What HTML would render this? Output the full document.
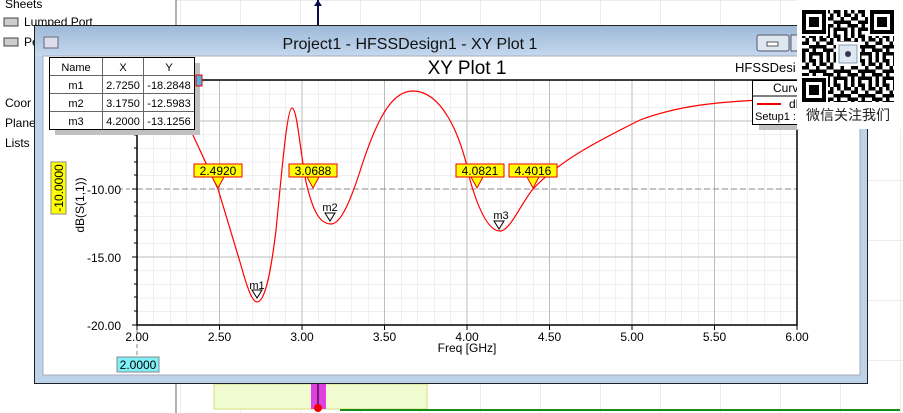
<!DOCTYPE html>
<html><head><meta charset="utf-8"><style>
html,body{margin:0;padding:0;width:903px;height:413px;overflow:hidden;background:#fff;font-family:"Liberation Sans","Noto Sans CJK SC",sans-serif}
svg{position:absolute;left:0;top:0}
</style></head><body>
<svg width="903" height="413" viewBox="0 0 903 413" font-family="Liberation Sans, Noto Sans CJK SC, sans-serif">
<defs>
<pattern id="bg" x="0" y="0" width="60" height="60" patternUnits="userSpaceOnUse"><path d="M0 0H60M0 0V60" stroke="#e6e6e6" stroke-width="1.5" fill="none"/></pattern>
<pattern id="mg" x="137" y="80.2" width="16.5" height="13.6" patternUnits="userSpaceOnUse"><path d="M0 0H16.5M0 0V13.6" stroke="#e0e0e0" stroke-width="1" fill="none"/></pattern>
<pattern id="qr" x="802" y="10" width="24.5" height="24.5" patternUnits="userSpaceOnUse">
<path d="M0 0h3.5v3.5h-3.5zM7 0h7v3.5h-7zM17.5 0h3.5v7h-3.5zM3.5 3.5h3.5v7h-3.5zM10.5 3.5h3.5v3.5h-3.5zM21 3.5h3.5v3.5h-3.5zM0 7h3.5v3.5h-3.5zM14 7h3.5v7h-3.5zM7 10.5h7v3.5h-7zM17.5 10.5h7v3.5h-7zM0 14h3.5v7h-3.5zM3.5 14h3.5v3.5h-3.5zM10.5 14h3.5v7h-3.5zM21 14h3.5v3.5h-3.5zM7 17.5h3.5v7h-3.5zM14 17.5h7v3.5h-7zM0 21h3.5v3.5h-3.5zM17.5 21h3.5v3.5h-3.5z" fill="#000"/>
</pattern>
<linearGradient id="tb" x1="0" y1="0" x2="0" y2="1"><stop offset="0" stop-color="#9db9d8"/><stop offset="1" stop-color="#c4d8ee"/></linearGradient>
</defs>
<rect x="176" y="0" width="727" height="413" fill="url(#bg)"/>
<line x1="176" y1="0" x2="176" y2="413" stroke="#666"/>
<text x="5" y="8" font-size="12">Sheets</text>
<rect x="4" y="18" width="14" height="8" fill="#ccc" stroke="#444"/><text x="24" y="26" font-size="12">Lumped Port</text>
<rect x="4" y="38" width="14" height="8" fill="#ccc" stroke="#444"/><text x="24" y="46" font-size="12">Pe</text>
<text x="5" y="107" font-size="12">Coor</text>
<text x="5" y="127" font-size="12">Plane</text>
<text x="5" y="147" font-size="12">Lists</text>
<line x1="318" y1="0" x2="318" y2="25" stroke="#0a0a50" stroke-width="2"/>
<path d="M314 6L318 0L322 6Z" fill="#0a0a50"/>
<rect x="214" y="384" width="213" height="25" fill="#f1fbd0" stroke="#d8dc7a"/>
<rect x="311" y="384" width="15" height="25" fill="#e040e0"/>
<line x1="318" y1="384" x2="318" y2="405" stroke="#000"/>
<circle cx="318" cy="408" r="4" fill="#e00"/>
<path d="M340 410H900" stroke="#1a8a1a" stroke-width="2"/>
<rect x="34.5" y="25.5" width="833" height="358" fill="#bcd3ea" stroke="#222"/>
<rect x="35" y="26" width="832" height="30" fill="url(#tb)"/>
<rect x="43" y="56" width="817" height="319" fill="#fff" stroke="#aab"/>
<rect x="44" y="37" width="14" height="11" fill="#dde" stroke="#667"/>
<text x="410" y="49" font-size="16" text-anchor="middle" fill="#111">Project1 - HFSSDesign1 - XY Plot 1</text>
<rect x="757" y="35" width="32" height="16" rx="2" fill="#dfe7f1" stroke="#556"/>
<rect x="767" y="42" width="11" height="4" fill="#fff" stroke="#333" stroke-width="0.8"/>
<rect x="791" y="35" width="10" height="16" fill="#dfe7f1" stroke="#556"/>
<text x="467" y="74" font-size="19" text-anchor="middle">XY Plot 1</text>
<text x="735" y="72" font-size="13">HFSSDesi</text>
<rect x="137" y="80" width="660" height="245" fill="url(#mg)"/>
<g stroke="#bdbdbd" stroke-width="1">
<path d="M219.5 80V325M302 80V325M384.5 80V325M467 80V325M549.5 80V325M632 80V325M714.5 80V325"/>
<path d="M137 257H797M137 121H797"/>
</g>
<path d="M137 189H797" stroke="#888" stroke-dasharray="6,3"/>
<path d="M137 189H120" stroke="#888" stroke-dasharray="4,3"/>
<rect x="137" y="80" width="660" height="245" fill="none" stroke="#000" stroke-width="1.5"/>
<g stroke="#000">
<path d="M132 325H137M132 257H137M132 189H137M132 121H137M134 311H137M134 297H137M134 284H137M134 270H137M134 243H137M134 230H137M134 216H137M134 202H137M134 175H137M134 162H137M134 148H137M134 135H137M134 107H137M134 94H137"/>
<path d="M137 325V330M219.5 325V330M302 325V330M384.5 325V330M467 325V330M549.5 325V330M632 325V330M714.5 325V330M797 325V330"/>
</g>
<path d="M137 330V355" stroke="#888" stroke-dasharray="4,3"/>
<g font-size="12" text-anchor="end">
<text x="121" y="330">-20.00</text><text x="121" y="262">-15.00</text><text x="121" y="194">-10.00</text>
</g>
<g font-size="12" text-anchor="middle">
<text x="137" y="341">2.00</text><text x="219.5" y="341">2.50</text><text x="302" y="341">3.00</text><text x="384.5" y="341">3.50</text><text x="467" y="341">4.00</text><text x="549.5" y="341">4.50</text><text x="632" y="341">5.00</text><text x="714.5" y="341">5.50</text><text x="797" y="341">6.00</text>
<text x="467" y="352">Freq [GHz]</text>
</g>
<text transform="translate(84,205) rotate(-90)" font-size="12" text-anchor="middle">dB(S(1,1))</text>
<rect x="51" y="162" width="15" height="52" fill="#ff0" stroke="#888"/>
<text transform="translate(63,188) rotate(-90)" font-size="12" text-anchor="middle">-10.0000</text>
<rect x="117" y="357" width="42" height="15" fill="#7ff0f8" stroke="#888"/>
<text x="138" y="369" font-size="12" text-anchor="middle">2.0000</text>
<path d="M185 118L218 189L240 262C247 287 252 302 257 302C264 302 270 280 276 230C282 170 287 108 292 108C297 108 300 150 306 182C313 212 320 224 331 224C341 224 351 200 362 165C380 110 395 91 413 91C440 91 460 130 470 180C480 215 490 231 500 231C510 231 520 205 533 189C560 160 600 140 640 120C680 105 720 102 760 100" fill="none" stroke="#f00" stroke-width="1.2"/>
<g font-size="11" text-anchor="middle">
<path d="M252 290h10l-5 8z" fill="#fff" stroke="#000"/><text x="257" y="289">m1</text>
<path d="M325 213h10l-5 8z" fill="#fff" stroke="#000"/><text x="330" y="211">m2</text>
<path d="M494 221h10l-5 8z" fill="#fff" stroke="#000"/><text x="501" y="219">m3</text>
</g>
<g font-size="12" text-anchor="middle">
<rect x="194" y="164" width="48" height="13" fill="#ff0" stroke="#e00"/><path d="M212 177h12l-6 11z" fill="#ff0" stroke="#e00"/><text x="218" y="175">2.4920</text>
<rect x="289" y="164" width="48" height="13" fill="#ff0" stroke="#e00"/><path d="M307 177h12l-6 11z" fill="#ff0" stroke="#e00"/><text x="313" y="175">3.0688</text>
<rect x="456" y="164" width="48" height="13" fill="#ff0" stroke="#e00"/><path d="M471 177h12l-6 11z" fill="#ff0" stroke="#e00"/><text x="480" y="175">4.0821</text>
<rect x="509" y="164" width="48" height="13" fill="#ff0" stroke="#e00"/><path d="M527 177h12l-6 11z" fill="#ff0" stroke="#e00"/><text x="533" y="175">4.4016</text>
</g>
<rect x="55" y="63" width="145" height="72" fill="#c0c0c0"/>
<rect x="196" y="75" width="6" height="11" fill="#5ab0e0" stroke="#e00"/>
<rect x="49.5" y="57.5" width="145" height="72" fill="#fff" stroke="#000"/>
<g stroke="#666"><path d="M102.5 58V129M143.5 58V129M50 75.5H194M50 93.5H194M50 111.5H194"/></g>
<g font-size="11" text-anchor="middle">
<text x="76" y="71">Name</text><text x="123" y="71">X</text><text x="169" y="71">Y</text>
<text x="76" y="89">m1</text><text x="123" y="89">2.7250</text><text x="169" y="89">-18.2848</text>
<text x="76" y="107">m2</text><text x="123" y="107">3.1750</text><text x="169" y="107">-12.5983</text>
<text x="76" y="125">m3</text><text x="123" y="125">4.2000</text><text x="169" y="125">-13.1256</text>
</g>
<rect x="759" y="86" width="40" height="44" fill="#c0c0c0"/>
<rect x="752.5" y="80.5" width="50" height="44" fill="#fff" stroke="#000"/>
<line x1="753" y1="96" x2="802" y2="96" stroke="#000"/>
<text x="773" y="92" font-size="12">Curv</text>
<line x1="757" y1="104" x2="781" y2="104" stroke="#e00" stroke-width="2"/>
<text x="789" y="108" font-size="12">dB</text>
<text x="755" y="120" font-size="11">Setup1 :</text>
<!-- QR -->
<rect x="797" y="0" width="106" height="129" fill="#fff"/>
<rect x="802" y="10" width="92" height="92" fill="url(#qr)"/>
<g fill="#fff"><path d="M802 10h26v26h-26zM868 10h26v26h-26zM802 76h26v26h-26z"/></g>
<g fill="#000"><path d="M802 10h24v24h-24zM870 10h24v24h-24zM802 78h24v24h-24z"/></g>
<g fill="#fff"><path d="M806 14h16v16h-16zM874 14h16v16h-16zM806 82h16v16h-16z"/></g>
<g fill="#000"><path d="M809 17h10v10h-10zM877 17h10v10h-10zM809 85h10v10h-10z"/></g>
<rect x="836" y="42" width="24" height="24" fill="#fff"/>
<rect x="839" y="45" width="18" height="18" fill="#dfe7f1" stroke="#6a8ab0" stroke-width="0.8"/>
<circle cx="848" cy="54" r="3" fill="#335"/>
<text x="848" y="120" font-size="14" text-anchor="middle" fill="#222" font-family="Noto Sans CJK SC, sans-serif">微信关注我们</text>
</svg>
</body></html>
